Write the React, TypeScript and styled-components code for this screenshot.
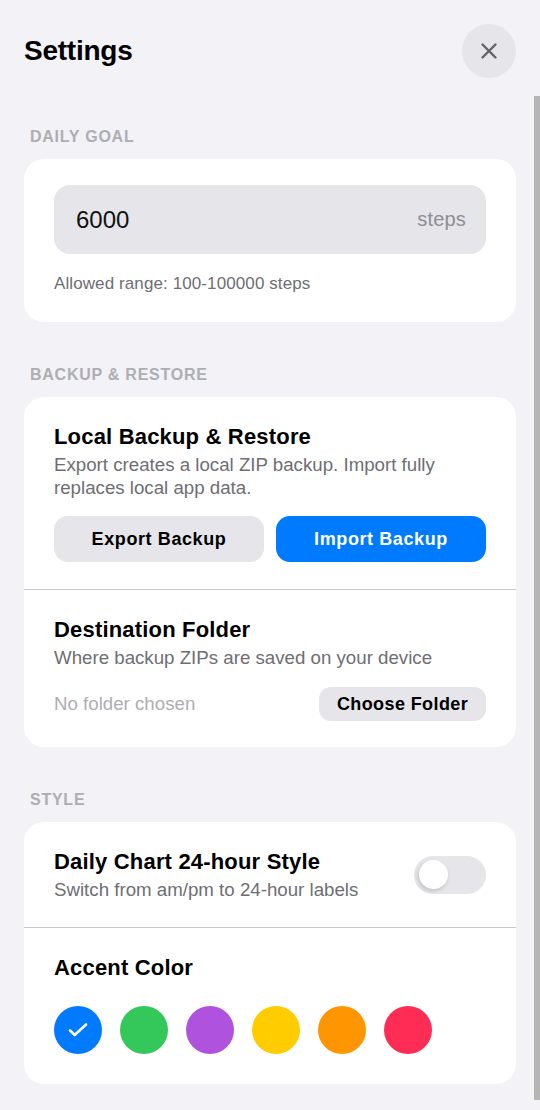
import React from 'react';
import styled, { createGlobalStyle } from 'styled-components';

const GlobalStyle = createGlobalStyle`
  html, body {
    margin: 0;
    padding: 0;
    height: 100%;
    overflow: hidden;
    background: #f2f2f7;
    font-family: "Liberation Sans", Arial, sans-serif;
  }
`;

const Screen = styled.div`
  width: 540px;
  height: 1110px;
  display: flex;
  flex-direction: column;
  background: #f2f2f7;
  position: relative;
  overflow: hidden;
`;

const Header = styled.header`
  height: 96px;
  padding: 24px 24px 0;
  box-sizing: border-box;
  display: flex;
  justify-content: space-between;
  align-items: flex-start;
`;

const Title = styled.h1`
  margin: 0;
  font-size: 28px;
  line-height: 54px;
  font-weight: 700;
  letter-spacing: -0.25px;
  color: #000;
`;

const CloseButton = styled.button`
  width: 54px;
  height: 54px;
  border: 0;
  border-radius: 50%;
  padding: 0;
  background: #e5e5ea;
  display: flex;
  align-items: center;
  justify-content: center;
`;

const Content = styled.main`
  padding: 31px 24px 0;
  display: flex;
  flex-direction: column;
  gap: 43px;
`;

const SectionLabel = styled.div`
  margin: 0 0 13px 6px;
  font-size: 16px;
  line-height: 19px;
  font-weight: 700;
  letter-spacing: 0.75px;
  color: #aeaeb2;
`;

const Card = styled.div`
  background: #fff;
  border-radius: 20px;
  overflow: hidden;
`;

const Row = styled.div`
  padding: 26px 30px;
  & + & {
    border-top: 1px solid #c7c7cc;
  }
`;

const GoalField = styled.div`
  height: 69px;
  padding: 0 20px 0 22px;
  border-radius: 16px;
  background: #e5e5ea;
  display: flex;
  align-items: center;
  justify-content: space-between;
`;

const GoalValue = styled.span`
  font-size: 24px;
  color: #111;
`;

const Unit = styled.span`
  font-size: 20px;
  letter-spacing: 0.2px;
  color: #8e8e93;
`;

const Hint = styled.p`
  margin: 20px 0 3px;
  font-size: 17px;
  line-height: 19px;
  letter-spacing: 0.1px;
  color: #6e6e73;
`;

const RowTitle = styled.div`
  font-size: 22px;
  line-height: 28px;
  font-weight: 700;
  letter-spacing: 0.18px;
  color: #000;
`;

const RowText = styled.p`
  margin: 2px 0 0;
  font-size: 18.7px;
  line-height: 23px;
  color: #6e6e73;
`;

const ButtonRow = styled.div`
  display: grid;
  grid-template-columns: 1fr 1fr;
  gap: 12px;
  margin-top: 17px;
`;

const ActionButton = styled.button<{ $primary?: boolean }>`
  height: 46px;
  border: 0;
  border-radius: 14px;
  padding: 0;
  font-family: inherit;
  font-size: 18px;
  font-weight: 700;
  letter-spacing: 0.6px;
  background: ${p => (p.$primary ? '#007aff' : '#e5e5ea')};
  color: ${p => (p.$primary ? '#fff' : '#000')};
`;

const BackupRow = styled(Row)`
  padding-bottom: 27px;
`;

const FolderRow = styled.div`
  display: flex;
  justify-content: space-between;
  align-items: center;
  margin-top: 18px;
`;

const FolderName = styled.span`
  font-size: 18.7px;
  color: #aeaeb2;
`;

const SmallButton = styled.button`
  height: 34px;
  width: 167px;
  padding: 0;
  border: 0;
  border-radius: 12px;
  font-family: inherit;
  font-size: 18px;
  font-weight: 700;
  letter-spacing: 0.4px;
  background: #e5e5ea;
  color: #000;
`;

const ToggleRow = styled(Row)`
  display: flex;
  justify-content: space-between;
  align-items: center;
`;

const Toggle = styled.div`
  width: 72px;
  height: 38px;
  border-radius: 19px;
  background: #e5e5ea;
  position: relative;
`;

const Knob = styled.div`
  position: absolute;
  top: 4px;
  left: 5px;
  width: 29px;
  height: 29px;
  border-radius: 50%;
  background: #fff;
  box-shadow: -1px 2px 4px rgba(0, 0, 0, 0.16);
`;

const AccentRow = styled(Row)`
  padding-bottom: 30px;
`;

const Swatches = styled.div`
  display: flex;
  gap: 18px;
  margin-top: 24px;
`;

const Swatch = styled.div<{ $color: string }>`
  width: 48px;
  height: 48px;
  border-radius: 50%;
  background: ${p => p.$color};
  display: flex;
  align-items: center;
  justify-content: center;
`;

const ScrollThumb = styled.div`
  position: absolute;
  top: 96px;
  right: 0;
  bottom: 10px;
  width: 6px;
  background: #b5b5b5;
`;

const accents = ['#007aff', '#34c759', '#af52de', '#ffcc00', '#ff9500', '#ff2d55'];

export default function App() {
  return (
    <Screen>
      <GlobalStyle />
      <Header>
        <Title>Settings</Title>
        <CloseButton aria-label="Close">
          <svg width="22" height="22" viewBox="0 0 22 22" fill="none" stroke="#636366" strokeWidth="2.4" strokeLinecap="round">
            <path d="M4.5 4.5l13 13M17.5 4.5l-13 13" />
          </svg>
        </CloseButton>
      </Header>
      <Content>
        <section>
          <SectionLabel>DAILY GOAL</SectionLabel>
          <Card>
            <Row>
              <GoalField>
                <GoalValue>6000</GoalValue>
                <Unit>steps</Unit>
              </GoalField>
              <Hint>Allowed range: 100-100000 steps</Hint>
            </Row>
          </Card>
        </section>
        <section>
          <SectionLabel>BACKUP &amp; RESTORE</SectionLabel>
          <Card>
            <BackupRow>
              <RowTitle>Local Backup &amp; Restore</RowTitle>
              <RowText>Export creates a local ZIP backup. Import fully replaces local app data.</RowText>
              <ButtonRow>
                <ActionButton>Export Backup</ActionButton>
                <ActionButton $primary>Import Backup</ActionButton>
              </ButtonRow>
            </BackupRow>
            <Row>
              <RowTitle>Destination Folder</RowTitle>
              <RowText>Where backup ZIPs are saved on your device</RowText>
              <FolderRow>
                <FolderName>No folder chosen</FolderName>
                <SmallButton>Choose Folder</SmallButton>
              </FolderRow>
            </Row>
          </Card>
        </section>
        <section>
          <SectionLabel>STYLE</SectionLabel>
          <Card>
            <ToggleRow>
              <div>
                <RowTitle>Daily Chart 24-hour Style</RowTitle>
                <RowText>Switch from am/pm to 24-hour labels</RowText>
              </div>
              <Toggle>
                <Knob />
              </Toggle>
            </ToggleRow>
            <AccentRow>
              <RowTitle>Accent Color</RowTitle>
              <Swatches>
                {accents.map((color, i) => (
                  <Swatch key={color} $color={color}>
                    {i === 0 && (
                      <svg width="24" height="24" viewBox="0 0 24 24" fill="none" stroke="#fff" strokeWidth="2.6" strokeLinecap="round" strokeLinejoin="round">
                        <path d="M4 12.5l4.7 4.5L20 6.5" />
                      </svg>
                    )}
                  </Swatch>
                ))}
              </Swatches>
            </AccentRow>
          </Card>
        </section>
      </Content>
      <ScrollThumb />
    </Screen>
  );
}
